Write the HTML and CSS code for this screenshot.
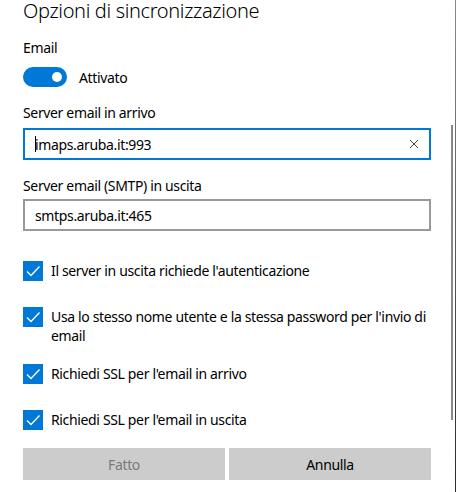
FILE: index.html
```html
<!DOCTYPE html>
<html>
<head>
	<meta charset="UTF-8">
	<title>Opzioni di sincronizzazione</title>
	<link rel="stylesheet" href="styles.css">
</head>
<body>
	<div class="panel">
		<h1 class="title">Opzioni di sincronizzazione</h1>
		<!-- email -->
		<div class="label email-label">Email</div>
		<div class="toggle-row">
			<span class="toggle"><span class="knob"></span></span>
			<span class="toggle-text">Attivato</span>
		</div>
		<!-- server -->
		<div class="label label-in">Server email in arrivo</div>
		<div class="field active">
			<span class="caret"></span><span class="value">imaps.aruba.it:993</span>
			<svg class="clear" width="10" height="10" viewBox="0 0 10 10"><path d="M1 1L9 9M9 1L1 9" stroke="#444" stroke-width="1"/></svg>
		</div>
		<div class="label label-out">Server email (SMTP) in uscita</div>
		<div class="field field-out">
			<span class="value">smtps.aruba.it:465</span>
		</div>
		<!-- opzioni -->
		<ul class="checks">
			<li class="check"><span class="box"><svg width="20" height="20" viewBox="0 0 20 20"><path d="M4 10.5L8 14.5L16.5 5.5" fill="none" stroke="#fff" stroke-width="1.4"/></svg></span><span class="check-text">Il server in uscita richiede l'autenticazione</span></li>
			<li class="check"><span class="box"><svg width="20" height="20" viewBox="0 0 20 20"><path d="M4 10.5L8 14.5L16.5 5.5" fill="none" stroke="#fff" stroke-width="1.4"/></svg></span><span class="check-text">Usa lo stesso nome utente e la stessa password per l'invio di email</span></li>
			<li class="check"><span class="box"><svg width="20" height="20" viewBox="0 0 20 20"><path d="M4 10.5L8 14.5L16.5 5.5" fill="none" stroke="#fff" stroke-width="1.4"/></svg></span><span class="check-text">Richiedi SSL per l'email in arrivo</span></li>
			<li class="check"><span class="box"><svg width="20" height="20" viewBox="0 0 20 20"><path d="M4 10.5L8 14.5L16.5 5.5" fill="none" stroke="#fff" stroke-width="1.4"/></svg></span><span class="check-text">Richiedi SSL per l'email in uscita</span></li>
		</ul>
		<div class="buttons">
			<button class="btn disabled">Fatto</button>
			<button class="btn">Annulla</button>
		</div>
		<div class="scrollbar"></div>
	</div>
</body>
</html>
```

FILE: styles.css
```css
body{margin:0;padding:0;background:#fff;}
.panel{position:relative;width:432px;height:492px;padding-left:23px;border-right:1px solid #555;border-image:linear-gradient(#8a8a8a,#2a2a2a) 1;box-sizing:content-box;overflow:hidden;font-family:"Segoe UI","Noto Sans",sans-serif;font-size:14px;letter-spacing:-0.35px;color:#000;}
.title{margin:0;font-size:20px;font-weight:300;line-height:21px;letter-spacing:-0.35px;}
.label{line-height:20px;}
.email-label{margin-top:17px;}
.toggle-row{display:flex;align-items:center;height:20px;margin:9px 0 0 0;}
.toggle{display:flex;align-items:center;justify-content:flex-end;width:44px;height:20px;border-radius:10px;background:#0078d7;padding-right:5px;box-sizing:border-box;}
.knob{width:10px;height:10px;border-radius:50%;background:#fff;}
.toggle-text{margin-left:12px;}
.label-in{margin-top:16px;}
.label-out{margin-top:16px;}
.field{display:flex;align-items:center;width:408px;height:32px;margin-top:5px;border:2px solid #0078d7;box-sizing:border-box;padding:0 10px;}
.field-out{margin-top:3px;border-color:#999;}
.caret{width:1px;height:16px;background:#000;margin-right:-1px;}
.value{flex:1;}
.checks{margin:30px 0 0 0;padding:0;list-style:none;width:408px;}
.check{display:flex;align-items:flex-start;min-height:46px;padding-bottom:19px;box-sizing:border-box;}
.box{flex:none;width:20px;height:20px;background:#0078d7;}
.box svg{display:block;}
.check-text{flex:1;margin-left:8px;line-height:19px;}
.buttons{display:flex;gap:4px;width:408px;margin-top:-8px;}
.btn{flex:1;height:32px;border:0;background:#ccc;font-family:inherit;font-size:14px;letter-spacing:-0.35px;color:#000;padding:0;}
.btn.disabled{color:#7a7a7a;}
.scrollbar{position:absolute;right:2px;top:125px;width:2px;height:295px;background:#888;}
```
